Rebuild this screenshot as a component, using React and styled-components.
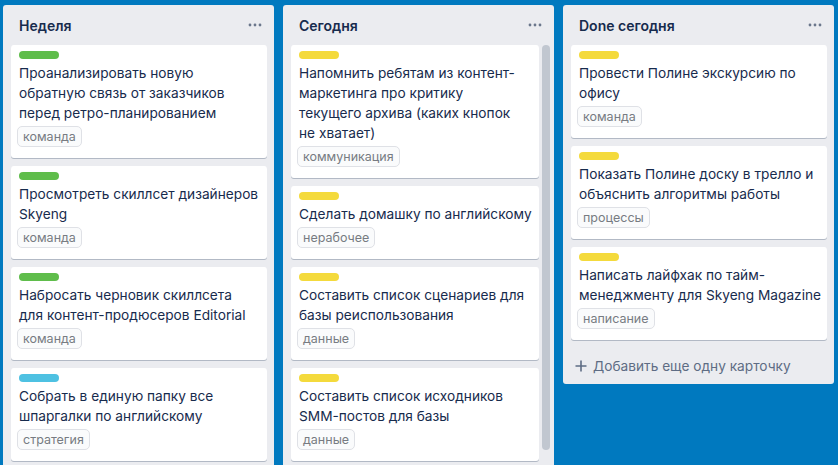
import styled, { createGlobalStyle } from "styled-components";

const GlobalStyle = createGlobalStyle`
  html, body {
    margin: 0;
    padding: 0;
    height: 465px;
    overflow: hidden;
    background: #0079bf;
  }
  body {
    font-family: Inter, "Liberation Sans", Arial, sans-serif;
    color: #172b4d;
  }
`;

const Board = styled.div`
  display: flex;
  align-items: flex-start;
  gap: 9px;
  padding: 5px 0 0 3px;
`;

const List = styled.div`
  width: 271px;
  flex: none;
  background: #ebecf0;
  border-radius: 3px;
  display: flex;
  flex-direction: column;
  padding-bottom: ${(p) => (p.$closed ? "0" : "40px")};
`;

const ListHeader = styled.div`
  height: 40px;
  display: flex;
  align-items: center;
  justify-content: space-between;
  padding: 0 12px 0 16px;
`;

const ListTitle = styled.h2`
  margin: 0;
  font-size: 14px;
  font-weight: 600;
  color: #172b4d;
`;

const MenuBtn = styled.span`
  display: flex;
  align-items: center;
  color: #6b778c;
`;

const ListBody = styled.div`
  display: flex;
  gap: 3px;
  padding: 0 ${(p) => (p.$scroll ? "4px" : "7px")} 0 8px;
`;

const Cards = styled.div`
  flex: 1;
  display: flex;
  flex-direction: column;
  gap: 8px;
  min-width: 0;
`;

const Scrollbar = styled.div`
  width: 8px;
  flex: none;
`;

const Thumb = styled.div`
  height: 405px;
  border-radius: 4px;
  background: #c1c7d0;
`;

const Card = styled.div`
  background: #fff;
  border-radius: 3px;
  box-shadow: 0 1px 0 rgba(9, 30, 66, 0.25);
  padding: 6px 8px 11px;
  display: flex;
  flex-direction: column;
  align-items: flex-start;
`;

const LabelBar = styled.span`
  width: 40px;
  height: 8px;
  border-radius: 4px;
  background: ${(p) => p.$color};
  margin-bottom: 4px;
`;

const CardTitle = styled.div`
  font-size: 13.7px;
  line-height: 20px;
  color: #172b4d;
  white-space: nowrap;
`;

const Tag = styled.span`
  display: inline-flex;
  align-items: center;
  height: 21px;
  box-sizing: border-box;
  margin: 3px 0 0 -2px;
  padding: 0 5px;
  border: 1px solid #dfe1e6;
  border-radius: 5px;
  background: #fafbfc;
  font-size: 12.5px;
  color: #777b82;
`;

const AddCard = styled.div`
  margin-top: 8px;
  height: 36px;
  display: flex;
  align-items: center;
  gap: 6px;
  padding: 0 12px;
  font-size: 13.7px;
  color: #5e6c84;
`;

const COLORS = {
  green: "#5fbd4b",
  yellow: "#f4da3c",
  blue: "#4ec1e2",
};

const lists = [
  {
    title: "Неделя",
    cards: [
      { color: "green", lines: ["Проанализировать новую", "обратную связь от заказчиков", "перед ретро-планированием"], tag: "команда" },
      { color: "green", lines: ["Просмотреть скиллсет дизайнеров", "Skyeng"], tag: "команда" },
      { color: "green", lines: ["Набросать черновик скиллсета", "для контент-продюсеров Editorial"], tag: "команда" },
      { color: "blue", lines: ["Собрать в единую папку все", "шпаргалки по английскому"], tag: "стратегия" },
    ],
  },
  {
    title: "Сегодня",
    scroll: true,
    cards: [
      { color: "yellow", lines: ["Напомнить ребятам из контент-", "маркетинга про критику", "текущего архива (каких кнопок", "не хватает)"], tag: "коммуникация" },
      { color: "yellow", lines: ["Сделать домашку по английскому"], tag: "нерабочее" },
      { color: "yellow", lines: ["Составить список сценариев для", "базы реиспользования"], tag: "данные" },
      { color: "yellow", lines: ["Составить список исходников", "SMM-постов для базы"], tag: "данные" },
    ],
  },
  {
    title: "Done сегодня",
    add: true,
    cards: [
      { color: "yellow", lines: ["Провести Полине экскурсию по", "офису"], tag: "команда" },
      { color: "yellow", lines: ["Показать Полине доску в трелло и", "объяснить алгоритмы работы"], tag: "процессы" },
      { color: "yellow", lines: ["Написать лайфхак по тайм-", "менеджменту для Skyeng Magazine"], tag: "написание" },
    ],
  },
];

const Dots = () => (
  <svg width="14" height="4" viewBox="0 0 14 4">
    <circle cx="2" cy="2" r="1.4" fill="currentColor" />
    <circle cx="7" cy="2" r="1.4" fill="currentColor" />
    <circle cx="12" cy="2" r="1.4" fill="currentColor" />
  </svg>
);

const Plus = () => (
  <svg width="12" height="12" viewBox="0 0 12 12">
    <path d="M6 0.5v11M0.5 6h11" stroke="currentColor" strokeWidth="1.6" />
  </svg>
);

const App = () => {
  return (
    <>
      <GlobalStyle />
      <Board>
        {lists.map((list) => (
          <List key={list.title} $closed={list.add}>
            <ListHeader>
              <ListTitle>{list.title}</ListTitle>
              <MenuBtn>
                <Dots />
              </MenuBtn>
            </ListHeader>
            <ListBody $scroll={list.scroll}>
              <Cards>
                {list.cards.map((card, index) => (
                  <Card key={index}>
                    <LabelBar $color={COLORS[card.color]} />
                    <CardTitle>
                      {card.lines.map((line, i) => (
                        <div key={i}>{line}</div>
                      ))}
                    </CardTitle>
                    <Tag>{card.tag}</Tag>
                  </Card>
                ))}
              </Cards>
              {list.scroll && (
                <Scrollbar>
                  <Thumb />
                </Scrollbar>
              )}
            </ListBody>
            {list.add && (
              <AddCard>
                <Plus />
                Добавить еще одну карточку
              </AddCard>
            )}
          </List>
        ))}
      </Board>
    </>
  );
};

export default App;
